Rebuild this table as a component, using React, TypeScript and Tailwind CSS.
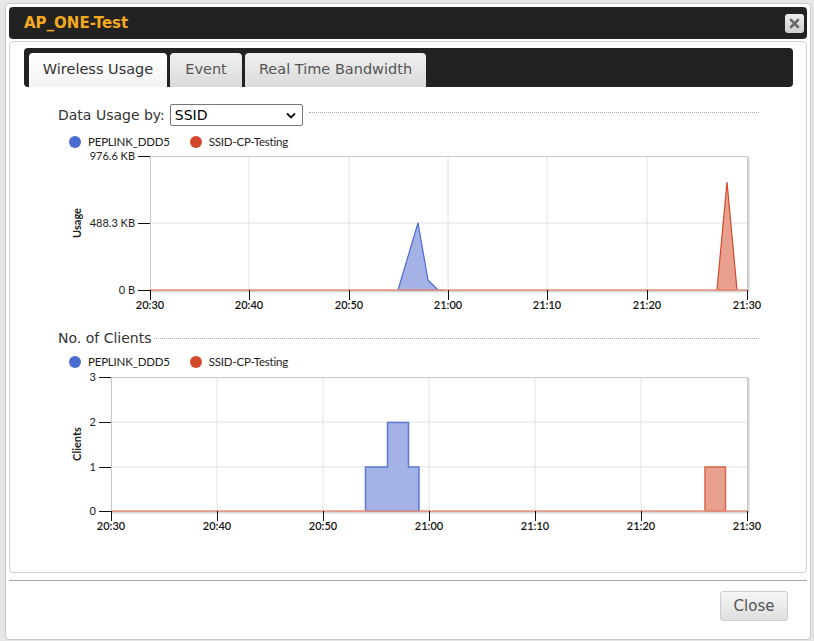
import React from "react";

const UI = { fontFamily: '"DejaVu Sans", Verdana, sans-serif' };
const CHART_FONT = '"Lato", "Open Sans", sans-serif';

const BLUE = "#4a6bd0";
const RED = "#d2482a";

function Legend() {
  return (
    <div
      className="flex h-[16px] items-center pl-[11px] text-[11.5px] tracking-[-0.2px] text-[#222]"
      style={{ fontFamily: CHART_FONT }}
    >
      <span className="h-[12px] w-[12px] rounded-full bg-[#4a6bd0]" />
      <span className="ml-[7px]">PEPLINK_DDD5</span>
      <span className="ml-[20px] h-[12px] w-[12px] rounded-full bg-[#d2482a]" />
      <span className="ml-[7px]">SSID-CP-Testing</span>
    </div>
  );
}

interface ChartProps {
  top: number;
  height: number;
  left: number;
  right: number;
  plotTop: number;
  plotBottom: number;
  yTicks: { y: number; label: string }[];
  xTicks: number[];
  yTitle: string;
  children: React.ReactNode;
}

const X_LABELS = ["20:30", "20:40", "20:50", "21:00", "21:10", "21:20", "21:30"];

function Chart({ top, height, left, right, plotTop, plotBottom, yTicks, xTicks, yTitle, children }: ChartProps) {
  const midY = (plotTop + plotBottom) / 2;
  return (
    <svg width={702} height={height} viewBox={`58 ${top} 702 ${height}`} className="block overflow-visible">
      {/* plot background + grid */}
      <rect x={left} y={plotTop} width={right - left} height={plotBottom - plotTop} fill="#fff" />
      {yTicks.slice(1, -1).map((t) => (
        <line key={t.y} x1={left} x2={right} y1={t.y} y2={t.y} stroke="#e2e2e2" />
      ))}
      {xTicks.slice(1, -1).map((x) => (
        <line key={x} x1={x} x2={x} y1={plotTop} y2={plotBottom} stroke="#e2e2e2" />
      ))}
      {/* frame with shadow */}
      <line x1={right + 1.5} x2={right + 1.5} y1={plotTop + 1} y2={plotBottom + 2} stroke="#d4d4d4" strokeWidth={2} />
      <line x1={left} x2={right + 2} y1={plotBottom + 1.5} y2={plotBottom + 1.5} stroke="#d8d8d8" strokeWidth={2} />
      <rect x={left + 0.5} y={plotTop + 0.5} width={right - left} height={plotBottom - plotTop} fill="none" stroke="#c8c8c8" />

      {children}

      {/* baseline */}
      <line x1={left} x2={right} y1={plotBottom} y2={plotBottom} stroke="#e9907c" strokeWidth={1.5} />

      {/* y ticks */}
      {yTicks.map((t) => (
        <g key={t.label}>
          <line x1={left - 12} x2={left} y1={t.y + 0.5} y2={t.y + 0.5} stroke="#111" />
          <text
            x={left - 15}
            y={t.y + 4}
            textAnchor="end"
            fontSize={11}
            fill="#222"
            style={{ fontFamily: CHART_FONT }}
          >
            {t.label}
          </text>
        </g>
      ))}
      {/* x ticks */}
      {xTicks.map((x, i) => (
        <g key={x}>
          <line x1={x + 0.5} x2={x + 0.5} y1={plotBottom} y2={plotBottom + 10} stroke="#111" />
          <text
            x={x}
            y={plotBottom + 19}
            textAnchor="middle"
            fontSize={11}
            fontWeight={600}
            fill="#111"
            style={{ fontFamily: CHART_FONT }}
          >
            {X_LABELS[i]}
          </text>
        </g>
      ))}
      <text
        x={81}
        y={midY}
        transform={`rotate(-90 81 ${midY})`}
        textAnchor="middle"
        fontSize={11}
        fontWeight={700}
        fill="#222"
        style={{ fontFamily: CHART_FONT }}
      >
        {yTitle}
      </text>
    </svg>
  );
}

function UsageChart() {
  return (
    <Chart
      top={150}
      height={164}
      left={150}
      right={747}
      plotTop={156}
      plotBottom={290}
      yTicks={[
        { y: 156, label: "976.6 KB" },
        { y: 223, label: "488.3 KB" },
        { y: 290, label: "0 B" },
      ]}
      xTicks={[150, 249, 349, 448, 547, 647, 747]}
      yTitle="Usage"
    >
      <polygon
        points="398,290 418,223 428,280 438,290"
        fill="#a4b2e6"
        stroke={BLUE}
        strokeWidth={1.2}
        strokeLinejoin="round"
      />
      <line x1={438} x2={445} y1={290} y2={290} stroke={BLUE} />
      <polygon points="717,290 727,182 737,290" fill="#e9a08e" stroke={RED} strokeWidth={1.2} />
    </Chart>
  );
}

function ClientsChart() {
  return (
    <Chart
      top={370}
      height={162}
      left={111}
      right={747}
      plotTop={377}
      plotBottom={511}
      yTicks={[
        { y: 377, label: "3" },
        { y: 422, label: "2" },
        { y: 467, label: "1" },
        { y: 511, label: "0" },
      ]}
      xTicks={[111, 217, 323, 429, 535, 641, 747]}
      yTitle="Clients"
    >
      <path
        d="M365.5 511 V467 H387.5 V422.5 H408.5 V467 H419 V511 Z"
        fill="#a4b2e6"
        stroke="#5a78d4"
        strokeWidth={1.5}
      />
      <path d="M705 511 V467 H725.5 V511 Z" fill="#e9a08e" stroke="#d8654a" strokeWidth={1.5} />
    </Chart>
  );
}

function Tab({ label, active, width }: { label: string; active?: boolean; width: string }) {
  return (
    <div
      className={`flex h-[34px] items-center justify-center rounded-t-[4px] text-[14.5px] ${width} ${
        active
          ? "bg-gradient-to-b from-white to-[#f3f3f3] text-[#333]"
          : "bg-gradient-to-b from-[#f0f0f0] to-[#dadada] text-[#555]"
      }`}
    >
      {label}
    </div>
  );
}

export default function App() {
  return (
    <div className="h-[641px] w-[814px] overflow-hidden bg-[#e6e6e6] pl-[5px] pt-[3px]" style={UI}>
      <div className="flex h-[637px] w-[806px] flex-col rounded-[4px] border border-[#c8c8c8] bg-white px-[3px] pt-[3px]">
        {/* title bar */}
        <div className="flex h-[32px] shrink-0 items-center justify-between rounded-[4px] bg-[#222] pl-[15px] pr-[3px]">
          <span className="text-[15px] font-bold text-[#f4a91f]">AP_ONE-Test</span>
          <div className="flex h-[19px] w-[19px] items-center justify-center rounded-[3px] bg-gradient-to-b from-[#eee] to-[#cfcfcf]">
            <svg width="11" height="11" viewBox="0 0 11 11">
              <path d="M2 2 L9 9 M9 2 L2 9" stroke="#6a6a6a" strokeWidth="2.6" strokeLinecap="round" />
            </svg>
          </div>
        </div>

        {/* content panel */}
        <div className="mt-[2px] h-[532px] shrink-0 rounded-[4px] border border-[#cfcfcf] pl-[14px] pr-[13px] pt-[6px]">
          <div className="flex h-[39px] items-end gap-[3px] rounded-[4px] bg-[#222] pl-[5px]">
            <Tab label="Wireless Usage" active width="w-[138px]" />
            <Tab label="Event" width="w-[72px]" />
            <Tab label="Real Time Bandwidth" width="w-[181px]" />
          </div>

          <div className="pl-[34px] pr-[34px]">
            {/* Data usage selector */}
            <div className="mt-[17px] flex h-[22px] items-center">
              <span className="text-[14px] text-[#333]">Data Usage by:</span>
              <div className="ml-[5px] flex h-[22px] w-[133px] items-center justify-between rounded-[2px] border border-[#767676] pl-[4px] pr-[6px] text-[14px] text-black">
                <span>SSID</span>
                <svg width="10" height="7" viewBox="0 0 10 7">
                  <path d="M1 1.5 L5 5.5 L9 1.5" fill="none" stroke="#111" strokeWidth="1.8" />
                </svg>
              </div>
              <div className="ml-[6px] -mt-[5px] flex-1 border-t border-dotted border-[#a3abbd]" />
            </div>

            <div className="mt-[8px]">
              <Legend />
            </div>
            <UsageChart />

            {/* clients */}
            <div className="mt-[16px] flex h-[16px] items-center">
              <span className="text-[14px] text-[#333]">No. of Clients</span>
              <div className="ml-[3px] flex-1 border-t border-dotted border-[#a3abbd]" />
            </div>
            <div className="mt-[8px]">
              <Legend />
            </div>
            <ClientsChart />
          </div>
        </div>

        {/* footer */}
        <div className="mt-[7px] border-t border-[#a6a6a6]" />
        <div className="flex justify-end pr-[19px] pt-[10px]">
          <button className="h-[30px] w-[68px] rounded-[3px] border border-[#cdcdcd] bg-gradient-to-b from-[#f6f6f6] to-[#dfdfdf] text-[15px] text-[#555]">
            Close
          </button>
        </div>
      </div>
    </div>
  );
}
